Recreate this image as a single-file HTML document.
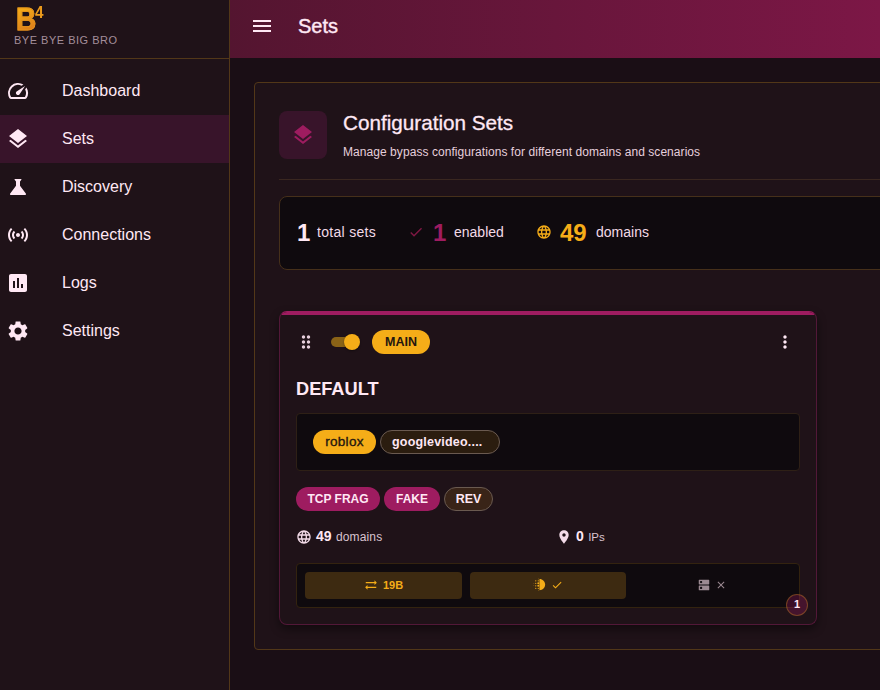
<!DOCTYPE html>
<html lang="en">
<head>
<meta charset="utf-8">
<title>B4 - Sets</title>
<style>
*{box-sizing:border-box;margin:0;padding:0}
html,body{width:880px;height:690px;overflow:hidden;background:#1a0e15;color:#ffe8f4;
  font-family:"Liberation Sans","DejaVu Sans",sans-serif;}
body{position:relative}
svg{display:block;fill:currentColor}
.abs{position:absolute}
/* sidebar */
#side{position:absolute;left:0;top:0;width:230px;height:690px;background:#1f1218;border-right:1px solid #523718}
#logoB{position:absolute;left:16px;top:1px;-webkit-text-stroke:.8px #e8951c;font-size:32px;font-weight:bold;line-height:36px;color:#ea9a1c;background:linear-gradient(160deg,#f5ad18 20%,#d9781c 85%);-webkit-background-clip:text;background-clip:text;-webkit-text-fill-color:transparent;transform:scaleX(.88);transform-origin:0 0}
#logo4{position:absolute;left:35px;top:4px;font-size:17px;transform:scaleX(.9);transform-origin:0 0;font-weight:bold;line-height:18px;color:#ea9a1c}
#tag{position:absolute;left:14px;top:33px;font-size:11px;line-height:14px;letter-spacing:.5px;color:#a48e9a;white-space:nowrap}
#sdiv{position:absolute;left:0;top:58px;width:229px;height:1px;background:#523718}
.nav{position:absolute;left:0;width:229px;height:48px}
.nav.act{background:#38142a}
.nav svg{position:absolute;left:6px;top:12px;width:24px;height:24px;color:#ffe8f4}
.nav span{position:absolute;left:62px;top:0;line-height:48px;font-size:16px;color:#ffe8f4;white-space:nowrap}
/* header */
#hdr{position:absolute;left:230px;top:0;width:650px;height:58px;background:linear-gradient(90deg,#541530 0%,#7c1746 100%)}
#hdr svg{position:absolute;left:20px;top:14px;width:24px;height:24px;color:#ffe8f4}
#hdr span{position:absolute;left:68px;top:0;line-height:52px;font-size:20px;color:#ffe8f4;-webkit-text-stroke:.4px #ffe8f4}
/* panel */
#panel{position:absolute;left:254px;top:82px;width:700px;height:568px;background:#1f1218;border:1px solid #523718;border-radius:4px}
#ibox{position:absolute;left:279px;top:111px;width:48px;height:48px;border-radius:8px;background:#38142a}
#ibox svg{position:absolute;left:12px;top:12px;width:24px;height:24px;color:#9e1c60}
#ttl{position:absolute;left:343px;top:108px;font-size:20.7px;line-height:30px;color:#ffe8f4;white-space:nowrap;-webkit-text-stroke:.3px #ffe8f4}
#sub{position:absolute;left:343px;top:144px;font-size:12px;line-height:16px;color:#e6cfdc;white-space:nowrap;letter-spacing:.06px}
#hdiv{position:absolute;left:279px;top:179px;width:601px;height:1px;background:#3a2720}
#stats{position:absolute;left:279px;top:196px;width:650px;height:74px;background:#0f0a0e;border:1px solid #46301a;border-radius:8px}
.big{position:absolute;top:219px;font-size:24px;font-weight:bold;line-height:28px}
.lbl{position:absolute;top:223px;font-size:14px;line-height:18px;color:#f3dbe8;white-space:nowrap}
/* card */
#card{position:absolute;left:279px;top:311px;width:538px;height:314px;background:#1f1218;border:1px solid #521838;border-top-color:#9e1c60;border-radius:8px;box-shadow:0 4px 10px rgba(0,0,0,.45);overflow:hidden}
#card::before{content:"";position:absolute;left:0;right:0;top:0;height:3px;background:#9e1c60}
.chip{position:absolute;height:24px;border-radius:12px;font-size:12.5px;font-weight:bold;line-height:24px;text-align:center;white-space:nowrap;overflow:hidden}
.gold{background:#f5ad18;color:#24160f}
.mag{background:#9e1c60;color:#ffe8f4;font-size:12px}
.outl{background:rgba(245,173,24,.12);border:1px solid #6a5a50;color:#ffe8f4;line-height:22px}
.dbox{position:absolute;background:#0f0a0e;border:1px solid #2e2016;border-radius:4px}
.tile{position:absolute;top:572px;height:27px;border-radius:4px;background:#3d2a11}
.srow{top:526px;font-size:12px;line-height:20px;color:#d9c3cf;white-space:nowrap}
.srow b{font-size:14px;color:#ffe8f4}
.srow span{letter-spacing:.15px;margin-left:1px}
</style>
</head>
<body>
<div id="side">
  <div id="logoB">B</div><div id="logo4">4</div>
  <div id="tag">BYE BYE BIG BRO</div>
  <div id="sdiv"></div>
  <div class="nav" style="top:67px"><svg viewBox="0 0 24 24"><path d="m20.38 8.57-1.23 1.85a8 8 0 0 1-.22 7.58H5.07A8 8 0 0 1 15.58 6.85l1.85-1.23A10 10 0 0 0 3.35 19a2 2 0 0 0 1.72 1h13.85a2 2 0 0 0 1.74-1 10 10 0 0 0-.27-10.44zm-9.79 6.84a2 2 0 0 0 2.83 0l5.66-8.49-8.49 5.66a2 2 0 0 0 0 2.83"/></svg><span>Dashboard</span></div>
  <div class="nav act" style="top:115px"><svg viewBox="0 0 24 24"><path d="m11.99 18.54-7.37-5.73L3 14.07l9 7 9-7-1.63-1.27zM12 16l7.36-5.73L21 9l-9-7-9 7 1.63 1.27z"/></svg><span>Sets</span></div>
  <div class="nav" style="top:163px"><svg viewBox="0 0 24 24"><path d="M19.8 18.4 14 10.67V6.5l1.35-1.69c.26-.33.03-.81-.39-.81H9.04c-.42 0-.65.48-.39.81L10 6.5v4.17L4.2 18.4c-.49.66-.02 1.6.8 1.6h14c.82 0 1.29-.94.8-1.6"/></svg><span>Discovery</span></div>
  <div class="nav" style="top:211px"><svg viewBox="0 0 24 24"><path d="M7.76 16.24C6.67 15.16 6 13.66 6 12s.67-3.16 1.76-4.24l1.42 1.42C8.45 9.9 8 10.9 8 12s.45 2.1 1.17 2.83zm8.48 0C17.33 15.16 18 13.66 18 12s-.67-3.16-1.76-4.24l-1.42 1.42C15.55 9.9 16 10.9 16 12s-.45 2.1-1.17 2.83zM12 10c-1.1 0-2 .9-2 2s.9 2 2 2 2-.9 2-2-.9-2-2-2m8 2c0 2.21-.9 4.21-2.35 5.65l1.42 1.42C20.88 17.26 22 14.76 22 12s-1.12-5.26-2.93-7.07l-1.42 1.42C19.1 7.79 20 9.79 20 12M6.350 6.350 4.930 4.930C3.120 6.740 2 9.240 2 12s1.120 5.260 2.930 7.070l1.420-1.420C4.900 16.210 4 14.210 4 12s.9-4.210 2.350-5.650"/></svg><span>Connections</span></div>
  <div class="nav" style="top:259px"><svg viewBox="0 0 24 24"><path d="M19 3H5c-1.1 0-2 .9-2 2v14c0 1.1.9 2 2 2h14c1.1 0 2-.9 2-2V5c0-1.1-.9-2-2-2M9 17H7v-7h2zm4 0h-2V7h2zm4 0h-2v-4h2z"/></svg><span>Logs</span></div>
  <div class="nav" style="top:307px"><svg viewBox="0 0 24 24"><path d="M19.14 12.940c.04-.3.06-.61.06-.94 0-.32-.02-.64-.07-.94l2.030-1.580c.18-.14.23-.41.12-.61l-1.920-3.320c-.12-.22-.37-.29-.59-.22l-2.390.96c-.5-.38-1.030-.7-1.620-.94l-.36-2.540c-.04-.24-.24-.41-.48-.41h-3.840c-.24 0-.43.17-.47.41l-.36 2.540c-.59.24-1.130.57-1.620.94l-2.390-.96c-.22-.08-.47 0-.59.22L2.740 8.870c-.12.21-.08.47.12.61l2.030 1.580c-.05.3-.09.63-.09.94s.02.64.07.94l-2.030 1.580c-.18.14-.23.41-.12.61l1.920 3.320c.12.22.37.29.59.22l2.390-.96c.5.38 1.030.7 1.620.94l.36 2.540c.05.24.24.41.48.41h3.840c.24 0 .44-.17.47-.41l.36-2.540c.59-.24 1.130-.56 1.620-.94l2.390.96c.22.08.47 0 .59-.22l1.920-3.320c.12-.22.07-.47-.12-.61zM12 15.600c-1.980 0-3.600-1.620-3.600-3.600s1.620-3.600 3.600-3.600 3.600 1.620 3.600 3.600-1.620 3.600-3.600 3.600"/></svg><span>Settings</span></div>
</div>

<div id="hdr"><svg viewBox="0 0 24 24"><path d="M3 18h18v-2H3zm0-5h18v-2H3zm0-7v2h18V6z"/></svg><span>Sets</span></div>

<div id="panel"></div>
<div id="ibox"><svg viewBox="0 0 24 24"><path d="m11.99 18.54-7.37-5.73L3 14.07l9 7 9-7-1.63-1.27zM12 16l7.36-5.73L21 9l-9-7-9 7 1.63 1.27z"/></svg></div>
<div id="ttl">Configuration Sets</div>
<div id="sub">Manage bypass configurations for different domains and scenarios</div>
<div id="hdiv"></div>

<div id="stats"></div>
<div class="big" style="left:297px;color:#ffe8f4">1</div>
<div class="lbl" style="left:317px;letter-spacing:.3px">total sets</div>
<svg class="abs" style="left:408px;top:224px;width:16px;height:16px;color:#811844" viewBox="0 0 24 24"><path d="M9 16.17 4.83 12l-1.42 1.41L9 19 21 7l-1.41-1.41z"/></svg>
<div class="big" style="left:433px;color:#9e1c60">1</div>
<div class="lbl" style="left:454px">enabled</div>
<svg class="abs" style="left:536px;top:224px;width:16px;height:16px;color:#f5ad18" viewBox="0 0 24 24"><path d="M11.99 2C6.47 2 2 6.48 2 12s4.47 10 9.990 10C17.520 22 22 17.520 22 12S17.520 2 11.990 2m6.930 6h-2.950c-.32-1.250-.78-2.450-1.380-3.560 1.840.63 3.370 1.910 4.330 3.560M12 4.040c.83 1.200 1.480 2.530 1.910 3.960h-3.820c.43-1.430 1.080-2.760 1.910-3.960M4.260 14C4.100 13.360 4 12.690 4 12s.1-1.360.26-2h3.380c-.08.66-.14 1.320-.14 2s.06 1.340.14 2zm.82 2h2.950c.32 1.250.78 2.450 1.380 3.560-1.840-.63-3.370-1.900-4.330-3.560m2.950-8H5.080c.96-1.660 2.490-2.930 4.330-3.560C8.810 5.550 8.350 6.750 8.030 8M12 19.960c-.83-1.200-1.480-2.530-1.910-3.960h3.820c-.43 1.430-1.080 2.760-1.910 3.960M14.340 14H9.660c-.09-.66-.16-1.320-.16-2s.07-1.350.16-2h4.680c.09.65.16 1.320.16 2s-.07 1.340-.16 2m.25 5.560c.6-1.110 1.060-2.310 1.380-3.560h2.950c-.96 1.650-2.490 2.930-4.330 3.560M16.360 14c.08-.66.14-1.320.14-2s-.06-1.340-.14-2h3.380c.16.64.26 1.310.26 2s-.1 1.360-.26 2z"/></svg>
<div class="big" style="left:560px;color:#f5ad18">49</div>
<div class="lbl" style="left:596px">domains</div>

<div id="card"></div>
<svg class="abs" style="left:296px;top:332px;width:20px;height:20px;color:#e6cfdc" viewBox="0 0 24 24"><path d="M11 18c0 1.100-.9 2-2 2s-2-.9-2-2 .9-2 2-2 2 .9 2 2m-2-8c-1.100 0-2 .9-2 2s.9 2 2 2 2-.9 2-2-.9-2-2-2m0-6c-1.100 0-2 .9-2 2s.9 2 2 2 2-.9 2-2-.9-2-2-2m6 4c1.100 0 2-.9 2-2s-.9-2-2-2-2 .9-2 2 .9 2 2 2m0 2c-1.100 0-2 .9-2 2s.9 2 2 2 2-.9 2-2-.9-2-2-2m0 6c-1.100 0-2 .9-2 2s.9 2 2 2 2-.9 2-2-.9-2-2-2"/></svg>
<div class="abs" style="left:331px;top:337px;width:26px;height:10px;border-radius:5px;background:#8a6317"></div>
<div class="abs" style="left:344px;top:334px;width:16px;height:16px;border-radius:8px;background:#f5ad18;box-shadow:0 1px 2px rgba(0,0,0,.4)"></div>
<div class="chip gold" style="left:372px;top:330px;width:58px">MAIN</div>
<svg class="abs" style="left:775px;top:332px;width:20px;height:20px;color:#ffe8f4" viewBox="0 0 24 24"><path d="M12 8c1.100 0 2-.9 2-2s-.9-2-2-2-2 .9-2 2 .9 2 2 2m0 2c-1.100 0-2 .9-2 2s.9 2 2 2 2-.9 2-2-.9-2-2-2m0 6c-1.100 0-2 .9-2 2s.9 2 2 2 2-.9 2-2-.9-2-2-2"/></svg>
<div class="abs" id="cname" style="left:296px;top:375px;font-size:18.2px;font-weight:bold;line-height:28px;color:#ffe8f4;white-space:nowrap">DEFAULT</div>

<div class="dbox" style="left:296px;top:413px;width:504px;height:58px"></div>
<div class="chip gold" style="left:313px;top:430px;width:63px;font-weight:normal;font-size:13.5px;letter-spacing:.3px;-webkit-text-stroke:.35px #24160f">roblox</div>
<div class="chip outl" style="left:380px;top:430px;width:120px;text-align:left;padding-left:11px;letter-spacing:.2px">googlevideo....</div>

<div class="chip mag" style="left:296px;top:487px;width:84px">TCP FRAG</div>
<div class="chip mag" style="left:384px;top:487px;width:56px">FAKE</div>
<div class="chip outl" style="left:444px;top:487px;width:49px">REV</div>

<svg class="abs" style="left:296px;top:529px;width:16px;height:16px;color:#f3dbe8" viewBox="0 0 24 24"><path d="M11.99 2C6.47 2 2 6.48 2 12s4.47 10 9.990 10C17.520 22 22 17.520 22 12S17.520 2 11.990 2m6.930 6h-2.950c-.32-1.250-.78-2.450-1.380-3.560 1.840.63 3.370 1.910 4.330 3.560M12 4.040c.83 1.200 1.480 2.530 1.910 3.960h-3.820c.43-1.430 1.080-2.760 1.910-3.960M4.260 14C4.100 13.360 4 12.690 4 12s.1-1.360.26-2h3.380c-.08.66-.14 1.320-.14 2s.06 1.340.14 2zm.82 2h2.950c.32 1.250.78 2.450 1.380 3.560-1.840-.63-3.370-1.900-4.330-3.560m2.950-8H5.080c.96-1.660 2.490-2.930 4.330-3.560C8.810 5.550 8.350 6.750 8.030 8M12 19.960c-.83-1.200-1.480-2.530-1.910-3.960h3.820c-.43 1.430-1.080 2.760-1.910 3.960M14.340 14H9.660c-.09-.66-.16-1.320-.16-2s.07-1.350.16-2h4.680c.09.65.16 1.320.16 2s-.07 1.340-.16 2m.25 5.560c.6-1.110 1.060-2.310 1.380-3.560h2.950c-.96 1.650-2.490 2.930-4.330 3.560M16.360 14c.08-.66.14-1.320.14-2s-.06-1.340-.14-2h3.380c.16.640.26 1.310.26 2s-.1 1.360-.26 2z"/></svg>
<div class="abs srow" style="left:316px"><b>49</b> <span>domains</span></div>
<svg class="abs" style="left:556px;top:529px;width:16px;height:16px;color:#f3dbe8" viewBox="0 0 24 24"><path d="M12 2C8.130 2 5 5.130 5 9c0 5.250 7 13 7 13s7-7.750 7-13c0-3.870-3.130-7-7-7m0 9.500c-1.380 0-2.500-1.120-2.500-2.500s1.120-2.500 2.500-2.500 2.500 1.120 2.500 2.500-1.120 2.500-2.500 2.500"/></svg>
<div class="abs srow" style="left:576px"><b>0</b> <span style="letter-spacing:0;font-size:11.5px">IPs</span></div>

<div class="dbox" style="left:296px;top:563px;width:504px;height:45px;border-color:#33230f"></div>
<div class="tile" style="left:305px;width:157px"></div>
<div class="tile" style="left:470px;width:156px"></div>
<svg class="abs" style="left:364px;top:578px;width:14px;height:14px;color:#f5ad18" viewBox="0 0 24 24"><path d="m18 12 4-4-4-4v3H3v2h15zM6 12l-4 4 4 4v-3h15v-2H6z"/></svg>
<div class="abs" style="left:383px;top:577px;font-size:11px;font-weight:bold;line-height:16px;color:#f5ad18">19B</div>
<svg class="abs" style="left:532px;top:577px;width:15px;height:15px;color:#f5ad18" viewBox="0 0 24 24"><path d="M12 3v18c4.970 0 9-4.030 9-9s-4.030-9-9-9"/><circle cx="6" cy="14" r="1"/><circle cx="6" cy="18" r="1"/><circle cx="6" cy="10" r="1"/><circle cx="3" cy="10" r=".5"/><circle cx="6" cy="6" r="1"/><circle cx="3" cy="14" r=".5"/><circle cx="10" cy="21" r=".5"/><circle cx="10" cy="3" r=".5"/><circle cx="10" cy="6" r="1"/><circle cx="10" cy="14" r="1.500"/><circle cx="10" cy="10" r="1.500"/><circle cx="10" cy="18" r="1"/></svg>
<svg class="abs" style="left:551px;top:579px;width:12px;height:12px;color:#f5ad18" viewBox="0 0 24 24"><path d="M9 16.170 4.830 12l-1.420 1.410L9 19 21 7l-1.410-1.410z"/></svg>
<svg class="abs" style="left:697px;top:578px;width:14px;height:14px;color:#9c8a92" viewBox="0 0 24 24"><path d="M20 13H4c-.55 0-1 .45-1 1v6c0 .55.45 1 1 1h16c.55 0 1-.45 1-1v-6c0-.55-.45-1-1-1M7 19c-1.100 0-2-.9-2-2s.9-2 2-2 2 .9 2 2-.9 2-2 2M20 3H4c-.55 0-1 .45-1 1v6c0 .55.45 1 1 1h16c.55 0 1-.45 1-1V4c0-.55-.45-1-1-1M7 9c-1.100 0-2-.9-2-2s.9-2 2-2 2 .9 2 2-.9 2-2 2"/></svg>
<svg class="abs" style="left:715px;top:579px;width:12px;height:12px;color:#9c8a92" viewBox="0 0 24 24"><path d="M19 6.410 17.590 5 12 10.590 6.410 5 5 6.410 10.590 12 5 17.590 6.410 19 12 13.410 17.590 19 19 17.590 13.410 12z"/></svg>
<div class="abs" style="left:786px;top:594px;width:22px;height:22px;border-radius:11px;background:rgba(158,28,96,.3);border:1px solid rgba(245,173,24,.3);font-size:11px;font-weight:bold;line-height:18px;text-align:center;color:#ffe8f4">1</div>
</body>
</html>
